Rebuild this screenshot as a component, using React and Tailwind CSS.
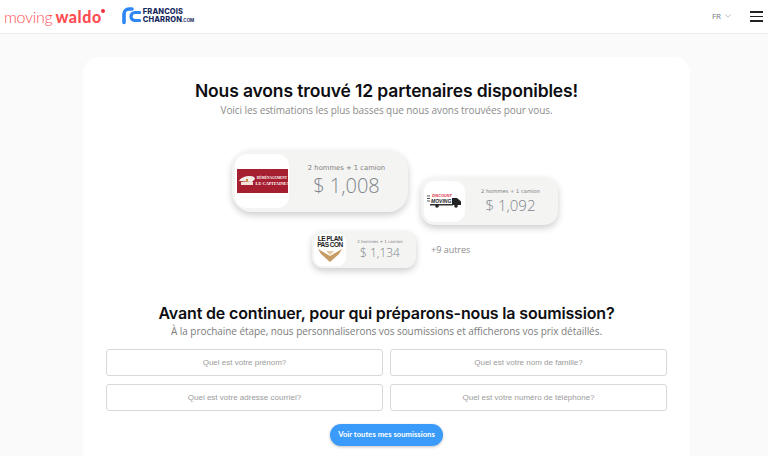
import React from 'react';
import { ChevronDown } from 'lucide-react';

function MovingWaldo() {
  return (
    <div className="relative flex items-baseline font-['Lato',sans-serif] text-[#ff4d52] leading-none">
      <span className="text-[16px] font-light tracking-[-0.3px]">moving</span>
      <span className="ml-[3px] text-[16px] font-black tracking-[0.6px]">waldo</span>
      <span className="absolute right-[-3px] top-[0px] w-[4px] h-[4px] rounded-full bg-[#f0303a]" />
    </div>
  );
}

function CharronLogo() {
  return (
    <div className="flex items-center ml-[20px]">
      <svg width="19" height="19" viewBox="0 0 19 19" fill="none">
        <path d="M10 2H7A5 5 0 0 0 2 7V15.5" stroke="#2e86f5" strokeWidth="3.6" strokeLinecap="round" />
        <path d="M17.5 5.5H13A4 4 0 0 0 13 13.5H17.5" stroke="#2e86f5" strokeWidth="3.2" strokeLinecap="round" />
      </svg>
      <div className="ml-[2px] font-['Inter',sans-serif] text-[#17295c] font-extrabold text-[7.5px] leading-[8px] tracking-[0.1px]">
        <div>FRANCOIS</div>
        <div>CHARRON<span className="text-[4.5px] font-bold tracking-normal">.COM</span></div>
      </div>
    </div>
  );
}

function LogoCapitaine() {
  return (
    <div className="w-[51px] h-[24px] bg-[#a51f30] flex items-center pl-[1px]">
      <svg width="18" height="12" viewBox="0 0 18 12" className="shrink-0">
        <path d="M1 6C2 3 7 1 12 1C15 1 17 2 17 4L14 7Z" fill="#f4ece6" />
        <path d="M3 7H15V10H3Z" fill="#f2e3d8" />
        <path d="M8 4H10V6.5H8Z" fill="#c9902f" />
      </svg>
      <div className="flex-1 text-center text-white font-['Liberation_Serif',serif] font-bold leading-[5.5px]">
        <div className="text-[3.4px] whitespace-nowrap">DÉMÉNAGEMENT</div>
        <div className="text-[4.4px] whitespace-nowrap">LE CAPITAINE!</div>
      </div>
    </div>
  );
}

function LogoDiscount() {
  return (
    <div className="relative w-[35px] h-[15px]">
      <div className="absolute left-[5px] top-[0px] text-[3.8px] leading-[5px] font-black italic font-['Liberation_Sans',sans-serif] text-[#d92c3a]">DISCOUNT</div>
      <div className="absolute left-[4px] top-[4px] text-[5px] leading-[6px] font-black italic font-['Liberation_Sans',sans-serif] text-[#222222]">MOVING</div>
      <svg width="35" height="15" viewBox="0 0 35 15" className="absolute left-0 top-0">
        <path d="M0 2H3M0 4.5H3M0 7H3" stroke="#555555" strokeWidth="1" />
        <path d="M25 4H30L34 7.5V11H25Z" fill="#222222" />
        <path d="M3 10H26V11.5H3Z" fill="#333333" />
        <circle cx="10" cy="12" r="1.8" fill="#222222" />
        <circle cx="29" cy="12" r="1.8" fill="#222222" />
      </svg>
    </div>
  );
}

function LogoPlan() {
  return (
    <div className="w-[28px] flex flex-col items-center">
      <div className="text-[6.5px] leading-[6px] font-black font-['Liberation_Sans',sans-serif] text-[#1c1c1c] tracking-[-0.5px] whitespace-nowrap text-center">
        <div>LE PLAN</div>
        <div>PAS CON</div>
      </div>
      <svg width="26" height="15" viewBox="0 0 26 15">
        <path d="M1 1L13 8L25 1L22 6L13 14L4 6Z" fill="#c59a63" />
        <path d="M9 3H17L13 7Z" fill="#e6c9a0" />
      </svg>
    </div>
  );
}

function PriceCard({ logo, logoClass, cardClass, labelClass, priceClass, price }) {
  return (
    <div className={`flex items-center bg-[#f4f4f3] shadow-[0_3px_7px_rgba(0,0,0,0.2)] ${cardClass}`}>
      <div className={`bg-white flex items-center justify-center overflow-hidden shrink-0 ${logoClass}`}>{logo}</div>
      <div className="flex-1 flex flex-col items-center">
        <span className={`font-['DejaVu_Sans',sans-serif] text-[#7d7d7d] whitespace-nowrap ${labelClass}`}>2 hommes + 1 camion</span>
        <span className={`font-['Open_Sans',sans-serif] font-light text-[#7f858b] whitespace-nowrap ${priceClass}`}>$ {price}</span>
      </div>
    </div>
  );
}

function Field({ placeholder }) {
  return (
    <div className="h-[27px] border border-[#d9d9d9] rounded-[3px] flex items-center justify-center text-[8px] text-[#9b9b9b] font-['Liberation_Sans',sans-serif] bg-white">
      {placeholder}
    </div>
  );
}

export default function App() {
  return (
    <div className="w-[768px] h-[456px] overflow-hidden bg-[#fafafa]">
      <header className="h-[34px] bg-white border-b border-[#ececec] flex items-center pl-[4px] pr-[5px]">
        <MovingWaldo />
        <CharronLogo />
        <div className="ml-auto flex items-center">
          <span className="text-[8px] text-[#6f7680] font-['Open_Sans',sans-serif] -mt-[1px]">FR</span>
          <ChevronDown className="w-[10px] h-[10px] ml-[2px] -mt-[1px] text-[#8a8f94]" strokeWidth={1.4} />
          <div className="ml-[17px] w-[13px] flex flex-col gap-[3px]">
            <div className="h-[1.5px] bg-[#222222]" />
            <div className="h-[1.5px] bg-[#222222]" />
            <div className="h-[1.5px] bg-[#222222]" />
          </div>
        </div>
      </header>

      <main className="ml-[83px] mt-[23px] w-[607px] h-[420px] bg-white rounded-t-[16px] pt-[22px] flex flex-col items-center">
        <h1 className="font-['Inter',sans-serif] text-[17.5px] leading-[24px] font-semibold text-[#0e0e12] tracking-[-0.14px] whitespace-nowrap">
          Nous avons trouvé 12 partenaires disponibles!
        </h1>
        <p className="font-['Open_Sans',sans-serif] text-[10px] leading-[15px] text-[#8c8c8c] tracking-[-0.08px] whitespace-nowrap">
          Voici les estimations les plus basses que nous avons trouvées pour vous.
        </p>

        <div className="w-full mt-[32px] pl-[149px] flex items-start">
          <PriceCard
            cardClass="w-[176px] h-[62px] rounded-[20px] pl-[3px] pr-[4px]"
            logoClass="w-[54px] h-[54px] rounded-[12px]"
            labelClass="text-[6.8px] leading-[10px]"
            priceClass="text-[20px] leading-[26px]"
            price="1,008"
            logo={<LogoCapitaine />}
          />
          <div className="ml-[13px] mt-[27px]">
            <PriceCard
              cardClass="w-[137px] h-[48px] rounded-[14px] pl-[3px] pr-[2px]"
              logoClass="w-[41px] h-[41px] rounded-[10px]"
              labelClass="text-[5.2px] leading-[8px]"
              priceClass="text-[15px] leading-[20px]"
              price="1,092"
              logo={<LogoDiscount />}
            />
          </div>
        </div>

        <div className="w-full mt-[6px] pl-[229px] flex items-center">
          <PriceCard
            cardClass="w-[104px] h-[37px] rounded-[11px] pl-[2px] pr-[2px]"
            logoClass="w-[32px] h-[32px] rounded-[8px]"
            labelClass="text-[4px] leading-[6px]"
            priceClass="text-[12px] leading-[16px]"
            price="1,134"
            logo={<LogoPlan />}
          />
          <span className="ml-[15px] font-['Open_Sans',sans-serif] text-[9px] text-[#8c8c8c]">+9 autres</span>
        </div>

        <h2 className="mt-[34px] font-['Inter',sans-serif] text-[16px] leading-[22px] font-semibold text-[#0e0e12] tracking-[-0.15px] whitespace-nowrap">
          Avant de continuer, pour qui préparons-nous la soumission?
        </h2>
        <p className="font-['Open_Sans',sans-serif] text-[10px] leading-[14px] text-[#7c7c7c] tracking-[-0.05px] whitespace-nowrap">
          À la prochaine étape, nous personnaliserons vos soumissions et afficherons vos prix détaillés.
        </p>

        <div className="w-[561px] mt-[11px] grid grid-cols-2 gap-x-[7px] gap-y-[8px]">
          <Field placeholder="Quel est votre prénom?" />
          <Field placeholder="Quel est votre nom de famille?" />
          <Field placeholder="Quel est votre adresse courriel?" />
          <Field placeholder="Quel est votre numéro de téléphone?" />
        </div>

        <button className="mt-[13px] h-[22px] w-[113px] rounded-full bg-[#3a9bfb] text-white text-[7.7px] font-bold font-['Lato',sans-serif] whitespace-nowrap shadow-[0_1px_3px_rgba(0,0,0,0.25)]">
          Voir toutes mes soumissions
        </button>
      </main>
    </div>
  );
}
